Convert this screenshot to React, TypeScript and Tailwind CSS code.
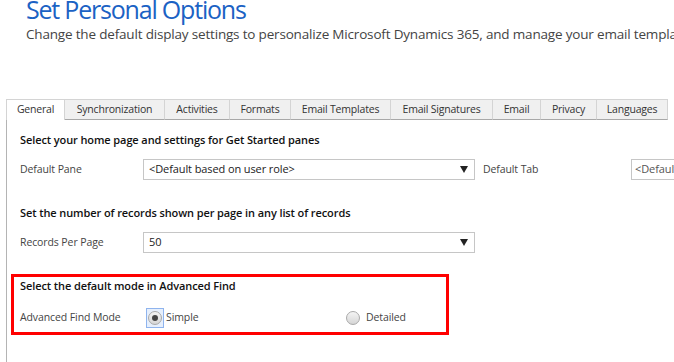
import React from "react";

const tabs: { label: string; w: number }[] = [
  { label: "General", w: 59 },
  { label: "Synchronization", w: 100 },
  { label: "Activities", w: 65 },
  { label: "Formats", w: 61 },
  { label: "Email Templates", w: 100 },
  { label: "Email Signatures", w: 102 },
  { label: "Email", w: 48 },
  { label: "Privacy", w: 56 },
  { label: "Languages", w: 71 },
];

function Arrow() {
  return (
    <svg width="8" height="7" viewBox="0 0 8 7" className="shrink-0">
      <path d="M0 0 H8 L4 7 Z" fill="#222" />
    </svg>
  );
}

function Select({ value, width }: { value: string; width: number }) {
  return (
    <div
      className="h-[21px] shrink-0 border border-[#c6c6c6] bg-white flex items-center pl-[5px] pr-[6px] justify-between"
      style={{ width }}
    >
      <span className="text-[11px] tracking-[-0.1px] text-[#222] whitespace-nowrap">{value}</span>
      <Arrow />
    </div>
  );
}

function Radio({ checked, focused }: { checked?: boolean; focused?: boolean }) {
  return (
    <div
      className={
        "w-[18px] h-[20px] shrink-0 flex items-center justify-center " +
        (focused ? "border border-[#8fb4ee] bg-[#e6effc]" : "border border-transparent")
      }
    >
      <div className="w-[14px] h-[14px] rounded-full border border-[#a9a9a9] bg-gradient-to-b from-[#f4f4f4] to-[#d6d6d6] flex items-center justify-center">
        {checked && <div className="w-[6px] h-[6px] rounded-full bg-[#444]" />}
      </div>
    </div>
  );
}

export default function App() {
  return (
    <div className="w-[674px] h-[362px] overflow-hidden bg-white font-['Open_Sans',sans-serif] text-[#444]">
      <div className="pl-[26px] whitespace-nowrap">
        <h1 className="text-[25px] leading-[28px] tracking-[-1.2px] mt-[-5px] text-[#1b62c4] font-normal">
          Set Personal Options
        </h1>
        <p className="text-[13.5px] leading-[18px] tracking-[-0.18px] mt-[2px] text-[#444]">
          Change the default display settings to personalize Microsoft Dynamics 365, and manage your email templates.
        </p>
      </div>

      <div className="mt-[56px] pl-[6px] flex">
        {tabs.map((t, i) => (
          <div
            key={t.label}
            className={
              "h-[21px] shrink-0 flex items-center justify-center text-[10.5px] tracking-[-0.2px] whitespace-nowrap border-t border-r " +
              (i === 0
                ? "bg-white border-l border-[#d4d4d4] text-[#333]"
                : "bg-[#f0f0f0] border-[#d4d4d4] border-b border-b-[#a8a8a8] text-[#333]")
            }
            style={{ width: t.w }}
          >
            {t.label}
          </div>
        ))}
      </div>

      <div className="ml-[6px] border-l border-[#b4b4b4] h-[260px] pl-[13px] pt-[12px]">
        <div className="text-[11px] tracking-[-0.1px] font-semibold text-[#111] leading-[16px] whitespace-nowrap">
          Select your home page and settings for Get Started panes
        </div>
        <div className="flex items-center mt-[11px] whitespace-nowrap">
          <div className="w-[123px] shrink-0 text-[10.5px] tracking-[-0.1px]">Default Pane</div>
          <Select value="<Default based on user role>" width={332} />
          <div className="w-[156px] shrink-0 pl-[8px] text-[10.5px] tracking-[-0.1px]">Default Tab</div>
          <div className="h-[21px] border border-[#c6c6c6] pl-[3px] flex items-center text-[11px] tracking-[-0.1px] text-[#555] w-[80px] shrink-0 overflow-hidden">
            &lt;Default
          </div>
        </div>

        <div className="text-[11px] tracking-[-0.1px] font-semibold text-[#111] leading-[16px] mt-[25px] whitespace-nowrap">
          Set the number of records shown per page in any list of records
        </div>
        <div className="flex items-center mt-[11px] whitespace-nowrap">
          <div className="w-[123px] shrink-0 text-[10.5px] tracking-[-0.1px]">Records Per Page</div>
          <Select value="50" width={332} />
        </div>

        <div className="mt-[21px] ml-[-9px] w-[438px] h-[61px] border-[3px] border-[#ff0000] pl-[6px] pt-[1px]">
          <div className="text-[11px] tracking-[-0.1px] font-semibold text-[#111] leading-[16px] whitespace-nowrap">
            Select the default mode in Advanced Find
          </div>
          <div className="flex items-center mt-[14px] whitespace-nowrap">
            <div className="w-[126px] shrink-0 text-[10.5px] tracking-[-0.1px]">Advanced Find Mode</div>
            <Radio checked focused />
            <span className="text-[10.5px] tracking-[-0.1px] ml-[2px] w-[178px] shrink-0">Simple</span>
            <Radio />
            <span className="text-[10.5px] tracking-[-0.1px] ml-[4px]">Detailed</span>
          </div>
        </div>
      </div>
    </div>
  );
}
